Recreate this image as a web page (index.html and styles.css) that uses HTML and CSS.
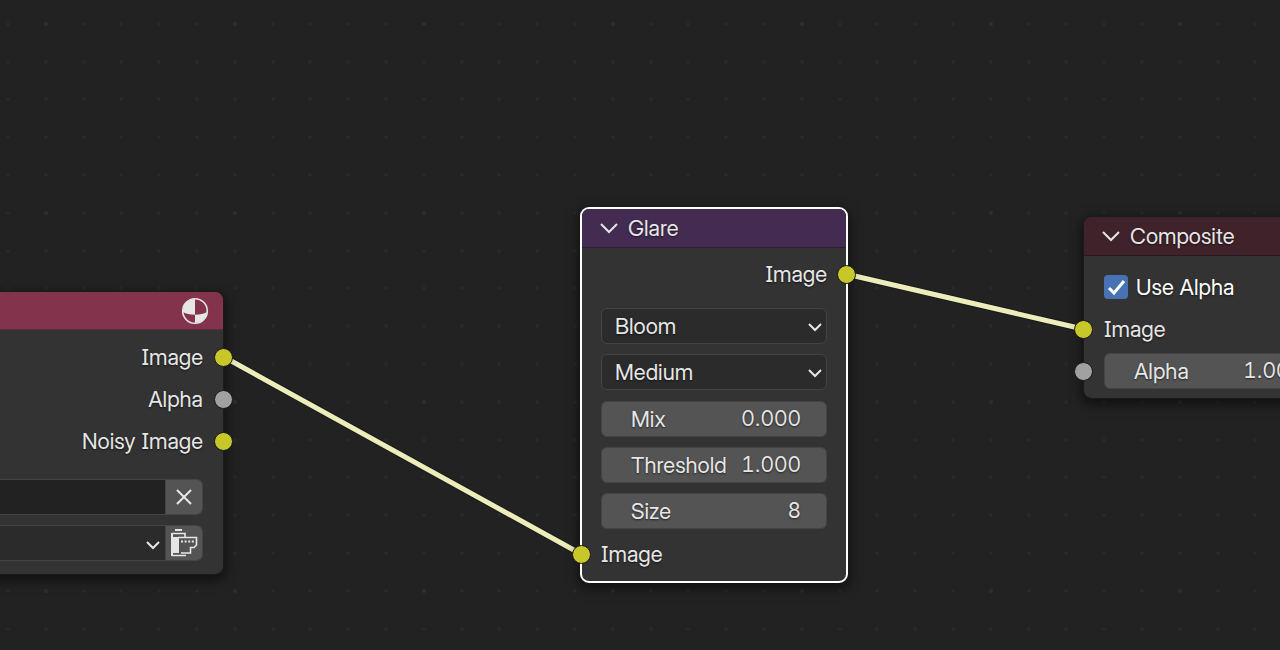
FILE: index.html
```html
<!DOCTYPE html>
<html lang="en">
<head>
<meta charset="utf-8">
<meta name="viewport" content="width=device-width, initial-scale=1">
<title>Compositor</title>
<link rel="stylesheet" href="styles.css">
</head>
<body>
<main class="canvas">
  <svg class="backdrop" aria-hidden="true">
    <defs>
      <pattern id="grid" x="27" y="5" width="189" height="189" patternUnits="userSpaceOnUse">
        <g fill="#2a2a2a">
          <circle cx="19" cy="19" r="2" fill="#2e2e2e"/><circle cx="57" cy="19" r="1.6"/><circle cx="94" cy="19" r="1.6"/><circle cx="132" cy="19" r="1.6"/><circle cx="170" cy="19" r="1.6"/>
          <circle cx="19" cy="57" r="1.6"/><circle cx="57" cy="57" r="1.6"/><circle cx="94" cy="57" r="1.6"/><circle cx="132" cy="57" r="1.6"/><circle cx="170" cy="57" r="1.6"/>
          <circle cx="19" cy="94" r="1.6"/><circle cx="57" cy="94" r="1.6"/><circle cx="94" cy="94" r="1.6"/><circle cx="132" cy="94" r="1.6"/><circle cx="170" cy="94" r="1.6"/>
          <circle cx="19" cy="132" r="1.6"/><circle cx="57" cy="132" r="1.6"/><circle cx="94" cy="132" r="1.6"/><circle cx="132" cy="132" r="1.6"/><circle cx="170" cy="132" r="1.6"/>
          <circle cx="19" cy="170" r="1.6"/><circle cx="57" cy="170" r="1.6"/><circle cx="94" cy="170" r="1.6"/><circle cx="132" cy="170" r="1.6"/><circle cx="170" cy="170" r="1.6"/>
        </g>
      </pattern>
    </defs>
    <rect width="100%" height="100%" fill="url(#grid)"/>
    <g class="link-outline"><path d="M224 357L581 554"/><path d="M846 274L1083 329"/></g>
    <g class="link"><path d="M224 357L581 554"/><path d="M846 274L1083 329"/></g>
  </svg>

  <section class="node node-layers" aria-label="Render Layers">
    <header class="node-header header-input">
      <svg class="icon-sphere" viewBox="0 0 28 28" role="img" aria-label="Preview">
        <circle cx="14" cy="14" r="12.3" fill="none" stroke="#e6e6e6" stroke-width="1.6"/>
        <path fill="#e6e6e6" d="M14 2A12 12 0 0 0 2 15C5 16.800 9 17.800 14 17.800ZM14 17.800C19 17.800 23 16.800 26 15A12 12 0 0 1 14 26Z"/>
      </svg>
    </header>
    <div class="node-body">
      <div class="row output">Image<i class="socket color"></i></div>
      <div class="row output">Alpha<i class="socket value"></i></div>
      <div class="row output">Noisy Image<i class="socket color"></i></div>
      <div class="fields">
        <div class="joined">
          <input class="scene" type="text" aria-label="Scene">
          <button class="tool" type="button" aria-label="Unlink scene">
            <svg class="icon-close" viewBox="0 0 16 16"><path d="M1 1L15 15M15 1L1 15"/></svg>
          </button>
        </div>
        <div class="joined">
          <span class="dropdown">
            <select aria-label="View layer"><option></option></select>
            <svg class="arrow" viewBox="0 0 14 10"><path d="M1 2L7 8L13 2"/></svg>
          </span>
          <button class="tool" type="button" aria-label="Render layer">
            <svg class="icon-render" viewBox="0 0 28 30">
              <path fill="#e6e6e6" d="M5 1H12V3H5ZM1 5H3V28H1ZM3 9H9V25H3Z"/>
              <path d="M2 5.500H15V9M8 9.500H26.500V17L24 19.500H20.500V25H11M2 27.500H16" fill="none" stroke="#e6e6e6" stroke-width="1.6"/>
              <path d="M11 13.500H24" fill="none" stroke="#e6e6e6" stroke-width="2" stroke-dasharray="2 1.600"/>
            </svg>
          </button>
        </div>
      </div>
    </div>
  </section>

  <section class="node node-glare selected" aria-labelledby="glare-title">
    <header class="node-header header-filter">
      <button class="collapse" type="button" aria-label="Collapse Glare"><svg class="chevron" viewBox="0 0 18 12"><path d="M1 2L9 10L17 2"/></svg></button>
      <span id="glare-title">Glare</span>
    </header>
    <div class="node-body">
      <div class="row output">Image<i class="socket color"></i></div>
      <div class="fields">
        <span class="dropdown">
          <select aria-label="Glare type"><option>Bloom</option></select>
          <svg class="arrow" viewBox="0 0 14 10"><path d="M1 2L7 8L13 2"/></svg>
        </span>
        <span class="dropdown">
          <select aria-label="Quality"><option>Medium</option></select>
          <svg class="arrow" viewBox="0 0 14 10"><path d="M1 2L7 8L13 2"/></svg>
        </span>
        <div class="number"><label for="mix">Mix</label><input id="mix" type="text" value="0.000"></div>
        <div class="number"><label for="threshold">Threshold</label><input id="threshold" type="text" value="1.000"></div>
        <div class="number"><label for="size">Size</label><input id="size" type="text" value="8"></div>
      </div>
      <div class="row input">Image<i class="socket color"></i></div>
    </div>
  </section>

  <section class="node node-composite" aria-labelledby="composite-title">
    <header class="node-header header-output">
      <button class="collapse" type="button" aria-label="Collapse Composite"><svg class="chevron" viewBox="0 0 18 12"><path d="M1 2L9 10L17 2"/></svg></button>
      <span id="composite-title">Composite</span>
    </header>
    <div class="node-body">
      <div class="row check">
        <input id="use-alpha" type="checkbox" checked>
        <label for="use-alpha">Use Alpha</label>
        <svg class="tick" viewBox="0 0 24 24" aria-hidden="true"><path d="M5 13L10 18L20 6"/></svg>
      </div>
      <div class="row input">Image<i class="socket color"></i></div>
      <div class="row input">
        <div class="number"><label for="alpha">Alpha</label><input id="alpha" type="text" value="1.000"></div>
        <i class="socket value"></i>
      </div>
    </div>
  </section>
</main>
</body>
</html>
```

FILE: styles.css
```css
*, *::before, *::after { box-sizing: border-box; }

body {
  margin: 0;
  background: #222222;
  color: #e6e6e6;
  font: 22px/28px "Inter Display", Inter, "Liberation Sans", sans-serif;
  font-feature-settings: "cv08", "tnum";
  font-variation-settings: "opsz" 32;
}

button, input, select {
  margin: 0;
  padding: 0;
  border: 0;
  border-radius: 0;
  background: none;
  color: inherit;
  font: inherit;
  font-feature-settings: inherit;
  font-variation-settings: inherit;
  text-shadow: inherit;
}

.canvas {
  position: relative;
  min-height: 100vh;
  overflow: hidden;
}

.backdrop {
  position: absolute;
  inset: 0;
  width: 100%;
  height: 100%;
}

.link { stroke: #ededbb; stroke-width: 5; }
.link-outline { stroke: #1a1a1a; stroke-width: 7; }

/* Nodes sit freely on the canvas */
.node {
  position: absolute;
  border: 1px solid #1b1b1b;
  border-radius: 9px;
  background: #333333;
  box-shadow: 0 4px 12px 2px rgba(0, 0, 0, 0.5);
  text-shadow: 0 1px 2px rgba(0, 0, 0, 0.6);
}

.node-layers { left: -43px; top: 291px; width: 267px; }
.node-glare { left: 580px; top: 207px; width: 268px; }
.node-composite { left: 1083px; top: 216px; width: 267px; }
.node.selected { border: 2px solid #ffffff; }

.node-header {
  display: flex;
  align-items: center;
  gap: 10px;
  height: 39px;
  padding: 0 18px;
  border-bottom: 1px solid #262626;
  border-radius: 8px 8px 0 0;
}

.header-input { height: 38px; justify-content: flex-end; padding: 0 14px; background: #83344c; border-bottom-color: #5a2b3b; }
.header-filter { background: #432b51; border-bottom-color: #2c2033; border-radius: 7px 7px 0 0; }
.header-output { background: #40222b; border-bottom-color: #2a1a1e; }

.collapse { display: flex; }

.chevron { width: 18px; height: 12px; }

.chevron, .arrow, .icon-close { fill: none; stroke: #e6e6e6; stroke-width: 2; }

.icon-sphere { width: 28px; height: 28px; }
.icon-close { width: 16px; height: 16px; }
.icon-render { width: 28px; height: 30px; }

.node-body { padding: 6px 20px 13px; }
.selected .node-body { padding: 5px 19px 6px; }
.node-composite .node-body { padding: 10px 20px 6px; }

.row {
  position: relative;
  display: flex;
  align-items: center;
  height: 42px;
}

.output { justify-content: flex-end; }

.socket {
  position: absolute;
  top: 12px;
  width: 19px;
  height: 19px;
  border: 1px solid #1a1a1a;
  border-radius: 50%;
  background: #c7c729;
}

.socket.value { background: #a1a1a1; }
.output .socket { right: -30px; }
.input .socket { left: -30px; }
.selected .output .socket { right: -29px; }
.selected .input .socket { left: -29px; }

.fields {
  display: flex;
  flex-direction: column;
  gap: 10px;
  margin-top: 17px;
}

.selected .fields { margin: 13px 0 4px; }

.joined {
  display: flex;
  height: 36px;
  border: 1px solid #444444;
  border-radius: 6px;
  overflow: hidden;
}

.scene { flex: 1; min-width: 0; background: #222222; }

.tool {
  display: flex;
  align-items: center;
  justify-content: center;
  width: 37px;
  border-left: 1px solid #444444;
  background: #545454;
}

.dropdown {
  position: relative;
  display: flex;
  flex: 1;
  min-height: 36px;
}

.dropdown select {
  width: 100%;
  padding: 0 32px 0 13px;
  border: 1px solid #444444;
  border-radius: 6px;
  background: #2b2b2b;
  appearance: none;
}

.joined .dropdown { min-height: 0; }
.joined select { border: 0; border-radius: 0; }

.arrow {
  position: absolute;
  right: 5px;
  top: 14px;
  width: 14px;
  height: 10px;
  pointer-events: none;
}

.number {
  display: flex;
  align-items: center;
  width: 100%;
  height: 36px;
  padding: 0 25px 0 29px;
  border: 1px solid #444444;
  border-radius: 6px;
  background: #545454;
}

.dropdown + .number { margin-top: 1px; }

.number input { flex: 1; min-width: 0; font-size: 21px; text-align: right; }

.check { gap: 8px; }

.check input {
  width: 24px;
  height: 24px;
  border-radius: 4px;
  background: #4772b3;
  appearance: none;
}

.check label { color: #ffffff; }

.tick {
  position: absolute;
  left: 0;
  top: 9px;
  width: 24px;
  height: 24px;
  fill: none;
  stroke: #ffffff;
  stroke-width: 3;
  pointer-events: none;
}
```
